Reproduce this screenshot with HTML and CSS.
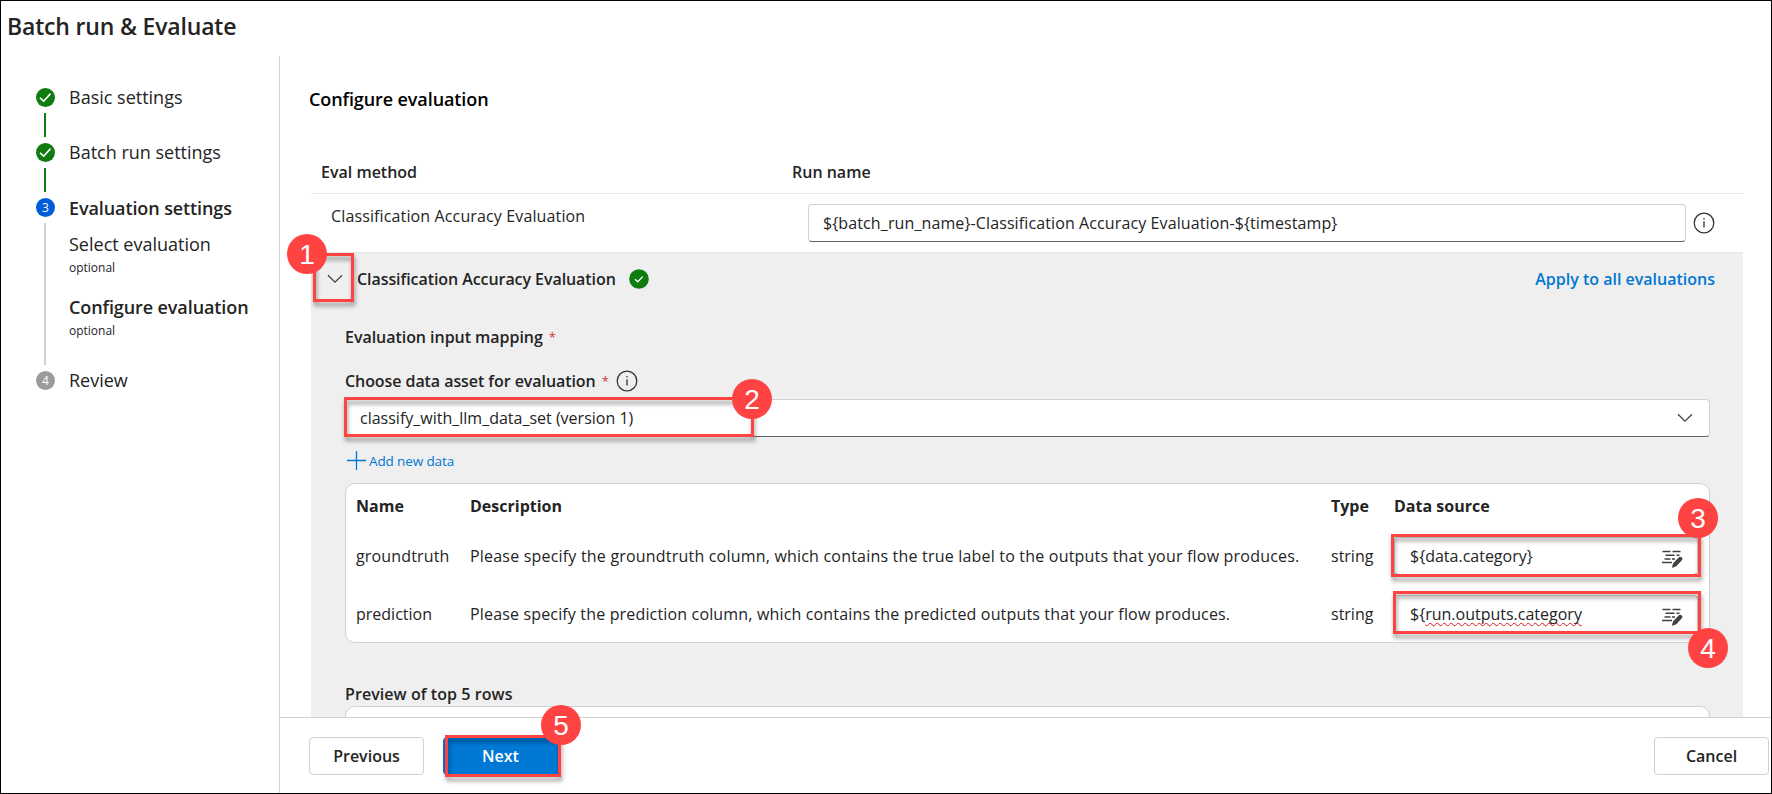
FILE: index.html
```html
<!DOCTYPE html>
<html lang="en">
<head>
<meta charset="utf-8">
<title>Batch run &amp; Evaluate</title>
<link rel="stylesheet" href="styles.css">
</head>
<body>
<div class="window">
  <h1 class="title">Batch run &amp; Evaluate</h1>
  <div class="columns">
    <nav class="steps">
      <div class="step">
        <div class="rail"><span class="dot dot-done"><svg width="19" height="19" viewBox="0 0 19 19"><path d="M4 9.8l3.7 3.4 6.8-7.6"/></svg></span><span class="line line-done"></span></div>
        <div class="step-text"><div class="label">Basic settings</div></div>
      </div>
      <div class="step">
        <div class="rail"><span class="dot dot-done"><svg width="19" height="19" viewBox="0 0 19 19"><path d="M4 9.8l3.7 3.4 6.8-7.6"/></svg></span><span class="line line-done"></span></div>
        <div class="step-text"><div class="label">Batch run settings</div></div>
      </div>
      <div class="step step-current">
        <div class="rail"><span class="dot dot-now">3</span><span class="line"></span></div>
        <div class="step-text">
          <div class="label strong current">Evaluation settings</div>
          <div class="label sub">Select evaluation</div>
          <div class="optional">optional</div>
          <div class="label strong sub2">Configure evaluation</div>
          <div class="optional">optional</div>
        </div>
      </div>
      <div class="step">
        <div class="rail"><span class="dot dot-todo">4</span></div>
        <div class="step-text"><div class="label">Review</div></div>
      </div>
    </nav>
    <main class="main">
      <div class="content">
        <h2 class="heading">Configure evaluation</h2>
        <div class="eval-head"><span class="col-method">Eval method</span><span class="col-run">Run name</span></div>
        <div class="eval-row">
          <span class="method">Classification Accuracy Evaluation</span>
          <div class="field run-field"><span class="run-text">${batch_run_name}-Classification Accuracy Evaluation-${timestamp}</span></div>
          <svg class="info" width="22" height="22" viewBox="0 0 22 22"><circle cx="11" cy="11" r="9.8"/><path d="M11 9.2v6.2M11 6v1.6"/></svg>
        </div>
        <section class="panel">
          <div class="panel-head">
            <svg class="chevron" width="16" height="10" viewBox="0 0 16 10"><path d="M1 1.2l7 7 7-7"/></svg>
            <span class="panel-title">Classification Accuracy Evaluation</span>
            <svg class="badge-ok" width="20" height="20" viewBox="0 0 20 20"><circle cx="10" cy="10" r="9.8"/><path d="M6 10.3l2.700 2.500 5-5.200"/></svg>
            <a class="apply">Apply to all evaluations</a>
          </div>
          <div class="panel-body">
            <div class="sub-title"><span class="mapping">Evaluation input mapping</span><span class="star">*</span></div>
            <div class="sub-title choose"><span class="choose-text">Choose data asset for evaluation</span><span class="star">*</span>
              <svg class="info" width="22" height="22" viewBox="0 0 22 22"><circle cx="11" cy="11" r="9.8"/><path d="M11 9.2v6.2M11 6v1.6"/></svg></div>
            <div class="field select"><span>classify_with_llm_data_set (version 1)</span>
              <svg class="chevron" width="16" height="10" viewBox="0 0 16 10"><path d="M1 1.2l7 7 7-7"/></svg></div>
            <div class="add"><svg width="19" height="19" viewBox="0 0 19 19"><path d="M9.5 0v19M0 9.5h19"/></svg><span>Add new data</span></div>
            <div class="table">
              <div class="tr th"><span>Name</span><span>Description</span><span>Type</span><span>Data source</span></div>
              <div class="tr row1"><span class="name">groundtruth</span><span class="desc1">Please specify the groundtruth column, which contains the true label to the outputs that your flow produces.</span><span>string</span>
                <div class="field source"><span>${data.category}</span><svg class="edit" width="22" height="18" viewBox="0 0 22 18"><path class="lines" d="M1.5 1.5h8M11.5 1.5h8M4.5 5.2h9M15.500 5.200h3M3.500 9h6M11 9h3M1 12.600h10"/><path class="pen" d="M17.600 7.600a2 2 0 0 1 3.200 2.700l-5.500 6-3.700 1.400-.6-.5 1-3.800z"/></svg></div></div>
              <div class="tr row2"><span>prediction</span><span class="desc2">Please specify the prediction column, which contains the predicted outputs that your flow produces.</span><span>string</span>
                <div class="field source"><span>${<span class="misspelt">run.outputs.category</span></span><svg class="edit" width="22" height="18" viewBox="0 0 22 18"><path class="lines" d="M1.5 1.5h8M11.5 1.5h8M4.5 5.2h9M15.500 5.200h3M3.500 9h6M11 9h3M1 12.600h10"/><path class="pen" d="M17.600 7.600a2 2 0 0 1 3.200 2.700l-5.500 6-3.700 1.400-.6-.5 1-3.800z"/></svg></div></div>
            </div>
            <div class="sub-title preview"><span class="preview-text">Preview of top 5 rows</span></div>
            <div class="preview-box"></div>
          </div>
        </section>
      </div>
      <footer class="footer">
        <button class="btn">Previous</button>
        <button class="btn primary">Next</button>
        <button class="btn cancel">Cancel</button>
      </footer>
    </main>
  </div>
  <div class="mark mark1"></div><div class="pin pin1">1</div>
  <div class="mark mark2"></div><div class="pin pin2">2</div>
  <div class="mark mark3"></div><div class="pin pin3">3</div>
  <div class="mark mark4"></div><div class="pin pin4">4</div>
  <div class="mark mark5"></div><div class="pin pin5">5</div>
</div>
</body>
</html>
```
FILE: styles.css
```css
* { box-sizing: border-box; }
body { margin: 0; background: #fff; color: #242424; font: 16px/22px "Open Sans", "Noto Sans", sans-serif; }
svg { display: block; flex: none; fill: none; }
span, a { white-space: nowrap; }
.window { position: relative; width: 1772px; height: 794px; border: 1px solid #000; overflow: hidden; display: flex; flex-direction: column; }
.title { margin: 0; height: 55px; padding: 9px 0 0 6px; font-size: 23px; line-height: 32px; font-weight: 600; letter-spacing: -.18px; }
.columns { flex: 1; min-height: 0; display: grid; grid-template-columns: 279px 1fr; }

/* Wizard steps */
.steps { border-right: 1px solid #d1d1d1; padding: 32px 0 0 35px; }
.step { display: flex; height: 55px; }
.step-current { height: 173px; }
.rail { width: 19px; display: flex; flex-direction: column; align-items: center; }
.dot { width: 19px; height: 19px; border-radius: 50%; flex: none; color: #fff; font-size: 12px; line-height: 19px; text-align: center; }
.dot-done { background: #107c10; }
.dot-done path { stroke: #fff; stroke-width: 1.6; }
.dot-now { background: #015cda; }
.dot-todo { background: #9b9b9b; }
.line { width: 2px; flex: 1; margin: 6px 3px 6px 2px; background: #d1d1d1; }
.line-done { background: #107c10; }
.step-text { padding-left: 14px; }
.label { height: 22px; font-size: 18px; line-height: 22px; margin-top: -2px; white-space: nowrap; }
.strong { font-weight: 600; letter-spacing: -.1px; }
.current { margin-top: -1px; }
.sub { margin-top: 14px; }
.sub2 { margin-top: 20px; }
.optional { font-size: 12px; line-height: 16px; height: 16px; margin-top: 5px; }

.main { display: flex; flex-direction: column; min-width: 0; min-height: 0; }
.content { flex: 1; min-height: 0; overflow: hidden; padding: 0 28px 0 31px; }
.heading { margin: 0 0 0 -2px; padding-top: 32px; height: 102px; font-size: 18px; line-height: 22px; font-weight: 600; letter-spacing: -.1px; color: #000; }
.eval-head { display: flex; height: 36px; border-bottom: 1px solid #e8e8e8; font-weight: 600; line-height: 24px; }
.col-method { width: 481px; padding: 2px 0 0 10px; }
.col-run { padding-top: 2px; }
.eval-row { display: flex; height: 58px; }
.method { width: 497px; padding: 11px 0 0 20px; letter-spacing: .13px; }
.field { display: flex; align-items: center; background: #fff; border: 1px solid #d1d1d1; border-bottom-color: #616161; border-radius: 4px; height: 38px; }
.run-field { width: 878px; margin-top: 10px; padding-left: 14px; }
.run-text { letter-spacing: .11px; }
.info { stroke: #333; stroke-width: 1.3; }
.eval-row .info { margin: 18px 0 0 7px; }

.panel { background: #efefef; border-top: 1px solid #e8e8e8; height: 520px; }
.panel-head { display: flex; align-items: center; height: 52px; padding: 0 28px 0 16px; font-weight: 600; }
.chevron path { stroke: #424242; stroke-width: 1.3; }
.panel-title { margin-left: 14px; letter-spacing: -.07px; }
.badge-ok { margin-left: 13px; }
.badge-ok circle { fill: #107c10; }
.badge-ok path { stroke: #fff; stroke-width: 1.3; }
.apply { margin-left: auto; color: #0078d4; }
.panel-body { padding: 21px 33px 0 34px; }
.sub-title { display: flex; align-items: center; height: 22px; font-weight: 600; }
.mapping { letter-spacing: -.04px; }
.choose-text { letter-spacing: -.07px; }
.star { color: #d13438; font-weight: 400; font-size: 13px; margin-left: 6px; }
.choose { margin-top: 22px; }
.choose .info { margin-left: 7px; }
.select { margin-top: 7px; padding: 0 16px 0 14px; justify-content: space-between; }
.add { display: flex; align-items: center; gap: 3px; height: 19px; margin: 14px 0 0 2px; color: #0078d4; font-size: 13.500px; letter-spacing: -.12px; }
.add path { stroke: #0078d4; stroke-width: 1.3; }
.table { margin-top: 13px; height: 160px; background: #fff; border: 1px solid #d1d1d1; border-radius: 10px; padding-left: 10px; }
.tr { display: grid; grid-template-columns: 114px 861px 63px 304px; align-items: center; }
.th { height: 46px; padding-bottom: 2px; font-weight: 700; }
.row1 { height: 52px; }
.row2 { height: 64px; }
.name { letter-spacing: .15px; }
.desc1 { letter-spacing: .198px; }
.desc2 { letter-spacing: .16px; }
.source { padding: 0 14px 0 15px; justify-content: space-between; }
.edit .lines { stroke: #424242; stroke-width: 1.5; }
.edit .pen { fill: #424242; }
.edit { margin-top: 5px; }
.misspelt { text-decoration: underline wavy #e81123 1px; text-underline-offset: 2px; text-decoration-skip-ink: none; }
.preview { margin-top: 40px; }
.preview-text { letter-spacing: .07px; }
.preview-box { height: 60px; margin-top: 1px; background: #fff; border: 1px solid #d1d1d1; border-radius: 10px; }

.footer { height: 76px; flex: none; border-top: 1px solid #d1d1d1; display: flex; padding: 19px 2px 0 29px; }
.btn { width: 115px; height: 38px; padding: 0; border: 1px solid #d1d1d1; border-radius: 4px; background: #fff; color: #242424; font: 600 16px/22px "Open Sans", "Noto Sans", sans-serif; }
.primary { width: 117px; margin-left: 19px; padding-right: 2px; background: #0078d4; border-color: #0078d4; color: #fff; }
.cancel { margin-left: auto; }

/* Numbered callouts */
.mark { position: absolute; border: 3px solid #ff4343; filter: drop-shadow(1px 4px 2px rgba(0, 0, 0, .4)); }
.pin { position: absolute; width: 40px; height: 40px; border-radius: 50%; background: #ff4343; color: #fff; font: 28px/41px "Liberation Sans", Arial, sans-serif; text-align: center; }
.mark1 { left: 312px; top: 252px; width: 41px; height: 49px; }
.mark2 { left: 343px; top: 396px; width: 410px; height: 40px; }
.mark3 { left: 1390px; top: 533px; width: 310px; height: 43px; }
.mark4 { left: 1392px; top: 590px; width: 308px; height: 43px; }
.mark5 { left: 444px; top: 734px; width: 116px; height: 42px; }
.pin1 { left: 286px; top: 233px; }
.pin2 { left: 731px; top: 378px; }
.pin3 { left: 1677px; top: 497px; }
.pin4 { left: 1687px; top: 627px; }
.pin5 { left: 540px; top: 704px; }
```
